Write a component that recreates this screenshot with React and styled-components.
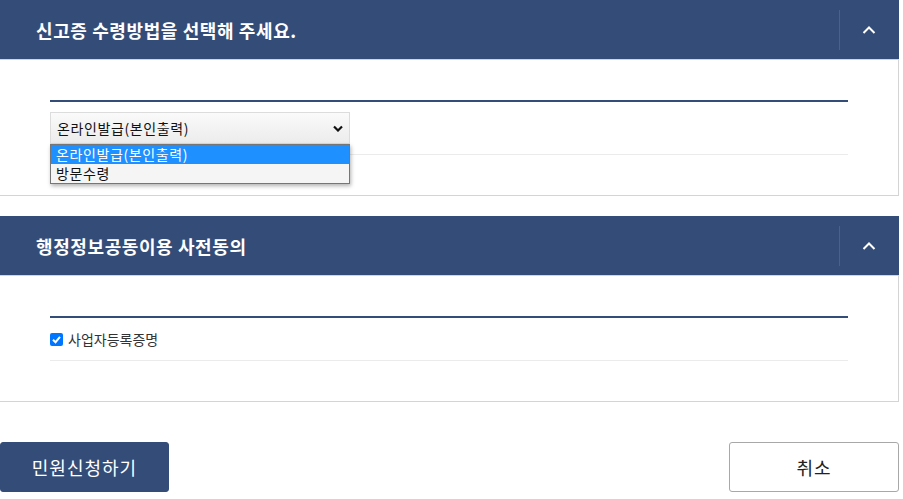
import styled, { createGlobalStyle } from "styled-components";

const GlobalStyle = createGlobalStyle`
  body {
    margin: 0;
    background: #fff;
    font-family: "Noto Sans CJK KR", "Noto Sans", sans-serif;
  }
`;

const Page = styled.div`
  width: 899px;
  display: flex;
  flex-direction: column;
`;

const Panel = styled.section`
  display: flex;
  flex-direction: column;
  margin-bottom: ${(p) => p.$gap || 20}px;
`;

const PanelHeader = styled.header`
  height: 59px;
  background: #344d78;
  display: flex;
  align-items: center;
  justify-content: space-between;
  padding-left: 36px;
  box-sizing: border-box;
`;

const Title = styled.h2`
  margin: 0;
  color: #fff;
  font-size: 18px;
  font-weight: 700;
  letter-spacing: 0.6px;
`;

const Toggle = styled.button`
  width: 60px;
  height: 40px;
  border: 0;
  border-left: 1px solid #4a6189;
  background: transparent;
  display: flex;
  align-items: center;
  justify-content: center;
  padding: 0;
  padding-right: 2px;
  color: #fff;
`;

const PanelBody = styled.div`
  border: 1px solid #d4d4d4;
  border-left: none;
  padding: 40px 50px 40px 50px;
`;

const Rule = styled.div`
  border-top: 2px solid #344d78;
  border-bottom: 1px solid #ebebeb;
`;

const FieldRow = styled.div`
  position: relative;
  padding: 10px 0;
  display: flex;
  align-items: center;
  min-height: ${(p) => p.$min || 0}px;
  box-sizing: border-box;
`;

const SelectBox = styled.div`
  width: 300px;
  height: 32px;
  box-sizing: border-box;
  border: 1px solid #dcdcdc;
  background: linear-gradient(#fafafa, #ececec);
  display: flex;
  align-items: center;
  justify-content: space-between;
  padding: 0 6px 0 6px;
  font-size: 14px;
  letter-spacing: 0.6px;
  color: #111;
`;

const OptionList = styled.ul`
  position: absolute;
  left: 0;
  top: 42px;
  width: 300px;
  box-sizing: border-box;
  margin: 0;
  padding: 0;
  list-style: none;
  border: 1px solid #767676;
  background: #f5f5f5;
  box-shadow: 1px 2px 4px rgba(0, 0, 0, 0.3);
`;

const Option = styled.li`
  height: 19px;
  line-height: 19px;
  padding-left: 5px;
  font-size: 14px;
  letter-spacing: 0.6px;
  color: ${(p) => (p.$active ? "#fff" : "#111")};
  background: ${(p) => (p.$active ? "#1e90ff" : "transparent")};
`;

const Check = styled.span`
  width: 13px;
  height: 13px;
  border-radius: 2px;
  background: #0075ff;
  display: inline-flex;
  align-items: center;
  justify-content: center;
  margin-right: 5px;
`;

const Label = styled.label`
  display: flex;
  align-items: center;
  font-size: 14px;
  color: #333;
`;

const Actions = styled.div`
  display: flex;
  justify-content: space-between;
`;

const Button = styled.button`
  height: 50px;
  width: ${(p) => (p.$primary ? 169 : 170)}px;
  border-radius: 3px;
  border: 1px solid ${(p) => (p.$primary ? "#344d78" : "#a8a8a8")};
  background: ${(p) => (p.$primary ? "#344d78" : "#fff")};
  color: ${(p) => (p.$primary ? "#fff" : "#222")};
  font-family: inherit;
  font-size: 18px;
  letter-spacing: 1px;
`;

function ChevronUp() {
  return (
    <svg width="14" height="9" viewBox="0 0 14 9">
      <path d="M1.5 8 L7 2.5 L12.5 8" fill="none" stroke="#fff" strokeWidth="2" />
    </svg>
  );
}

function ChevronDown() {
  return (
    <svg width="10" height="7" viewBox="0 0 10 7">
      <path d="M1 1.5 L5 5.5 L9 1.5" fill="none" stroke="#111" strokeWidth="2.2" />
    </svg>
  );
}

function CheckMark() {
  return (
    <svg width="11" height="11" viewBox="0 0 11 11">
      <path d="M2 5.8 L4.5 8.2 L9 2.8" fill="none" stroke="#fff" strokeWidth="2" />
    </svg>
  );
}

export default function App() {
  const options = ["온라인발급(본인출력)", "방문수령"];

  return (
    <Page>
      <GlobalStyle />

      <Panel>
        <PanelHeader>
          <Title>신고증 수령방법을 선택해 주세요.</Title>
          <Toggle>
            <ChevronUp />
          </Toggle>
        </PanelHeader>
        <PanelBody>
          <Rule>
            <FieldRow>
              <SelectBox>
                <span>{options[0]}</span>
                <ChevronDown />
              </SelectBox>
              <OptionList>
                {options.map((o, i) => (
                  <Option key={o} $active={i === 0}>
                    {o}
                  </Option>
                ))}
              </OptionList>
            </FieldRow>
          </Rule>
        </PanelBody>
      </Panel>

      <Panel $gap={40}>
        <PanelHeader>
          <Title>행정정보공동이용 사전동의</Title>
          <Toggle>
            <ChevronUp />
          </Toggle>
        </PanelHeader>
        <PanelBody>
          <Rule>
            <FieldRow $min={42}>
              <Label>
                <Check>
                  <CheckMark />
                </Check>
                사업자등록증명
              </Label>
            </FieldRow>
          </Rule>
        </PanelBody>
      </Panel>

      <Actions>
        <Button $primary>민원신청하기</Button>
        <Button>취소</Button>
      </Actions>
    </Page>
  );
}
